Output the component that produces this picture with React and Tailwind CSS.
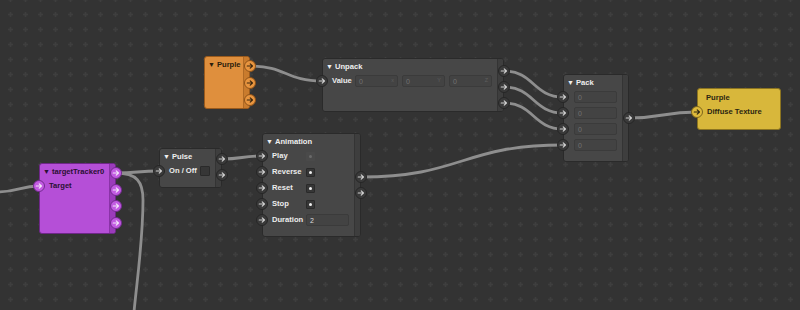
import React from 'react';

const themes = {
  gray: {
    body: 'bg-[#474747] border-[#2a2a2a]',
    strip: 'bg-[#3e3e3e] border-[#343434]',
    title: 'text-[#efefef]',
    port: 'bg-[#3a3a3a] border-[#262626]',
    arrow: '#d0d0d0',
  },
  orange: {
    body: 'bg-[#df8f3d] border-[#9a5a1c]',
    strip: 'bg-[#c97b2d] border-[#b06a25]',
    title: 'text-[#2b1d0c]',
    port: 'bg-[#e8953f] border-[#8e5218]',
    arrow: '#3a260f',
  },
  magenta: {
    body: 'bg-[#b54fd7] border-[#6f2789]',
    strip: 'bg-[#9b3bbb] border-[#8a33a8]',
    title: 'text-[#2a0f33]',
    port: 'bg-[#c25be2] border-[#732a8f]',
    arrow: '#f4e6fa',
  },
  yellow: {
    body: 'bg-[#d8b73b] border-[#8c7420]',
    title: 'text-[#2c2612]',
    port: 'bg-[#deba3b] border-[#7d661c]',
    arrow: '#2c2612',
  },
};

function Arrow({ color }) {
  return (
    <svg width="8" height="8" viewBox="0 0 8 8">
      <path
        d="M1.2 4h5.3M4.2 1.8 6.5 4 4.2 6.2"
        stroke={color}
        strokeWidth="1.1"
        fill="none"
        strokeLinecap="round"
        strokeLinejoin="round"
      />
    </svg>
  );
}

function Port({ theme, className = '' }) {
  const t = themes[theme];
  return (
    <span className={`flex h-[12px] w-[12px] shrink-0 items-center justify-center rounded-full border ${t.port} ${className}`}>
      <Arrow color={t.arrow} />
    </span>
  );
}

function Row({ theme, children, port = true }) {
  return (
    <div className="relative flex h-[16px] items-center pl-[9px]">
      {port && <Port theme={theme} className="absolute left-[-7px] top-[2px]" />}
      {children}
    </div>
  );
}

function Label({ className = '', children }) {
  return <span className={`whitespace-nowrap text-[7.6px] font-bold leading-none ${className}`}>{children}</span>;
}

function Field({ value, suffix, bright }) {
  return (
    <div className="flex h-[12px] w-[43px] items-center justify-between rounded-[2px] border border-[#3b3b3b] bg-[#434343] px-[3px]">
      <span className={`text-[7px] leading-none ${bright ? 'text-[#dcdcdc]' : 'text-[#727272]'}`}>{value}</span>
      {suffix && <span className="text-[5.5px] leading-none text-[#5e5e5e]">{suffix}</span>}
    </div>
  );
}

function Check({ dim, dot = true, big }) {
  return (
    <div
      className={`flex items-center justify-center rounded-[1px] ${big ? 'h-[10px] w-[10px]' : 'h-[9px] w-[9px]'} ${
        dim ? 'bg-[#4a4a4a]' : 'border border-[#2a2a2a] bg-[#363636]'
      }`}
    >
      {dot && <span className={`h-[3px] w-[3px] rounded-full ${dim ? 'bg-[#6a6a6a]' : 'bg-[#f0f0f0]'}`} />}
    </div>
  );
}

function Node({ pos, theme, title, outs = 0, outCls = '', children }) {
  const t = themes[theme];
  return (
    <div className={`absolute flex rounded-[3px] border ${pos} ${t.body}`}>
      <div className="flex min-w-0 flex-1 flex-col pt-[1px]">
        <div className={`flex h-[13px] items-center gap-[2px] pl-[3px] ${t.title}`}>
          <span className="text-[7px] leading-none">▼</span>
          <Label>{title}</Label>
        </div>
        {children}
      </div>
      <div className={`flex w-[6px] flex-col rounded-r-[2px] border-l ${t.strip} ${outCls}`}>
        {Array.from({ length: outs }).map((_, i) => (
          <Port key={i} theme={theme} />
        ))}
      </div>
    </div>
  );
}

function wire(x1, y1, x2, y2) {
  const d = Math.max(18, (x2 - x1) * 0.5);
  return `M${x1} ${y1} C${x1 + d} ${y1} ${x2 - d} ${y2} ${x2} ${y2}`;
}

const wires = [
  wire(250, 66, 322, 81),
  wire(504, 71, 563, 97),
  wire(504, 87, 563, 113),
  wire(504, 103, 563, 129),
  wire(361, 177, 563, 145),
  wire(629, 118, 697, 112),
  wire(222, 159, 262, 156),
  wire(116, 173, 159, 171),
  'M-5 192 C18 192 20 186 39 186',
  'M116 173 C137 173 143 182 143 200 C143 240 137 280 134 312',
];

export default function App() {
  return (
    <div className="relative h-[310px] w-[800px] overflow-hidden bg-[#333333] font-['Liberation_Sans',Arial,sans-serif] text-[#ececec]">
      <svg className="absolute inset-0" width="800" height="310">
        <defs>
          <pattern id="grid" width="15" height="15" patternUnits="userSpaceOnUse" x="3" y="-8">
            <rect x="5" y="6.75" width="5" height="1.5" fill="#3e3e3e" />
            <rect x="6.75" y="5" width="1.5" height="5" fill="#3e3e3e" />
          </pattern>
        </defs>
        <rect width="800" height="310" fill="url(#grid)" />
        {wires.map((d, i) => (
          <path key={i} d={d} stroke="#8e8e8e" strokeWidth="2.8" fill="none" strokeLinecap="round" />
        ))}
      </svg>

      {/* Purple (colour) */}
      <Node pos="left-[204px] top-[56px] w-[46px] h-[53px]" theme="orange" title="Purple" outs={3} outCls="pt-[3px] gap-[5px]" />

      {/* Unpack */}
      <Node pos="left-[322px] top-[58px] w-[182px] h-[54px]" theme="gray" title="Unpack" outs={3} outCls="pt-[6px] gap-[4px]">
        <Row theme="gray">
          <Label className="w-[23px]">Value</Label>
          <div className="flex gap-[4px]">
            <Field value="0" suffix="x" />
            <Field value="0" suffix="Y" />
            <Field value="0" suffix="Z" />
          </div>
        </Row>
      </Node>

      {/* Pack */}
      <Node pos="left-[563px] top-[74px] w-[66px] h-[88px]" theme="gray" title="Pack" outs={1} outCls="pt-[37px]">
        {[0, 1, 2, 3].map((i) => (
          <Row key={i} theme="gray">
            <div className="pl-[1px]">
              <Field value="0" />
            </div>
          </Row>
        ))}
      </Node>

      {/* Material texture */}
      <div className={`absolute left-[697px] top-[88px] flex h-[42px] w-[84px] flex-col rounded-[3px] border pt-[2px] ${themes.yellow.body} ${themes.yellow.title}`}>
        <div className="flex h-[13px] items-center pl-[8px]">
          <Label>Purple</Label>
        </div>
        <Row theme="yellow">
          <Label>Diffuse Texture</Label>
        </Row>
      </div>

      {/* targetTracker0 */}
      <Node pos="left-[39px] top-[163px] w-[77px] h-[71px]" theme="magenta" title="targetTracker0" outs={4} outCls="pt-[3px] gap-[4.6px]">
        <Row theme="magenta">
          <Label className="text-[#2a0f33]">Target</Label>
        </Row>
      </Node>

      {/* Pulse */}
      <Node pos="left-[159px] top-[148px] w-[63px] h-[40px]" theme="gray" title="Pulse" outs={2} outCls="pt-[4px] gap-[4px]">
        <Row theme="gray">
          <Label className="w-[31px] shrink-0">On / Off</Label>
          <Check big dot={false} />
        </Row>
      </Node>

      {/* Animation */}
      <Node pos="left-[262px] top-[133px] w-[99px] h-[104px]" theme="gray" title="Animation" outs={2} outCls="pt-[37px] gap-[4px]">
        <Row theme="gray">
          <Label className="w-[34px] shrink-0">Play</Label>
          <Check dim />
        </Row>
        <Row theme="gray">
          <Label className="w-[34px] shrink-0">Reverse</Label>
          <Check />
        </Row>
        <Row theme="gray">
          <Label className="w-[34px] shrink-0">Reset</Label>
          <Check />
        </Row>
        <Row theme="gray">
          <Label className="w-[34px] shrink-0">Stop</Label>
          <Check />
        </Row>
        <Row theme="gray">
          <Label className="w-[34px] shrink-0">Duration</Label>
          <Field value="2" bright />
        </Row>
      </Node>
    </div>
  );
}
